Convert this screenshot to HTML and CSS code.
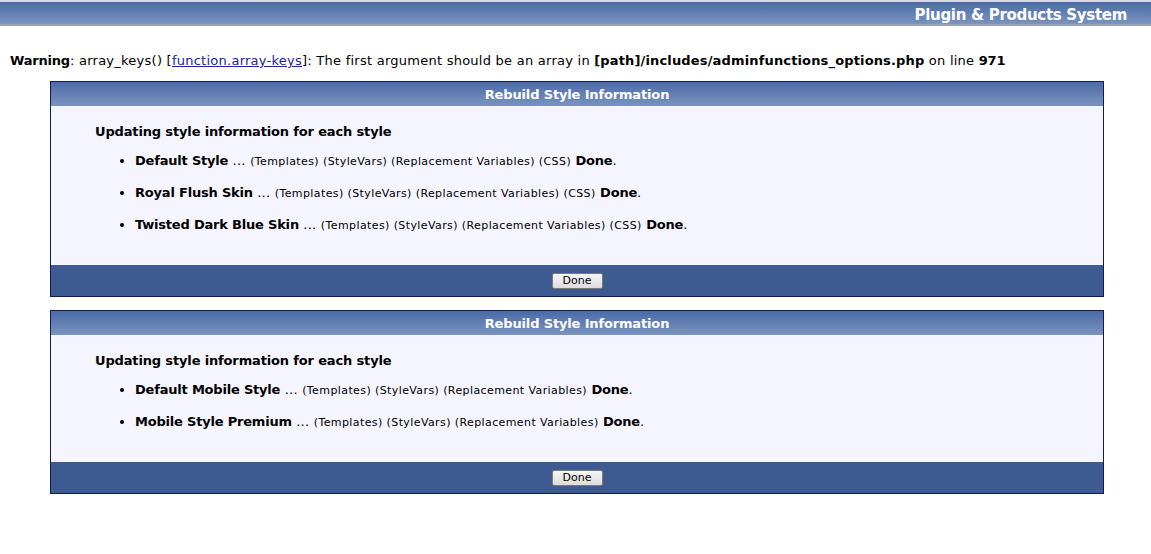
FILE: index.html
```html
<!DOCTYPE html>
<html>
<head>
<meta charset="utf-8">
<link rel="stylesheet" href="styles.css">
</head>
<body>
<div class="topbar"><span class="topbar-title">Plugin &amp; Products System</span></div>
<p class="warning"><b>Warning</b>: array_keys() [<a href="#">function.array-keys</a>]: The first argument should be an array in <b class="path">[path]/includes/adminfunctions_options.php</b> on line <b>971</b></p>

<div class="panel panel-1">
  <div class="panel-head">Rebuild Style Information</div>
  <div class="panel-body">
    <div class="panel-lead">Updating style information for each style</div>
    <ul class="style-list">
      <li><b>Default Style</b> ... <span class="sm">(Templates) (StyleVars) (Replacement Variables) (CSS)</span> <b>Done</b>.</li>
      <li><b>Royal Flush Skin</b> ... <span class="sm">(Templates) (StyleVars) (Replacement Variables) (CSS)</span> <b>Done</b>.</li>
      <li><b>Twisted Dark Blue Skin</b> ... <span class="sm">(Templates) (StyleVars) (Replacement Variables) (CSS)</span> <b>Done</b>.</li>
    </ul>
  </div>
  <div class="panel-foot"><button class="btn">Done</button></div>
</div>

<div class="panel panel-2">
  <div class="panel-head">Rebuild Style Information</div>
  <div class="panel-body">
    <div class="panel-lead">Updating style information for each style</div>
    <ul class="style-list">
      <li><b>Default Mobile Style</b> ... <span class="sm">(Templates) (StyleVars) (Replacement Variables)</span> <b>Done</b>.</li>
      <li><b>Mobile Style Premium</b> ... <span class="sm">(Templates) (StyleVars) (Replacement Variables)</span> <b>Done</b>.</li>
    </ul>
  </div>
  <div class="panel-foot"><button class="btn">Done</button></div>
</div>
</body>
</html>
```
FILE: styles.css
```css
html, body {
  margin: 0;
  padding: 0;
  background: #ffffff;
}
body {
  font-family: Verdana, "DejaVu Sans", sans-serif;
  font-size: 13px;
  letter-spacing: 0.25px;
  color: #000000;
}
b {
  letter-spacing: -0.2px;
}
.topbar {
  height: 19px;
  padding-top: 3px;
  border-top: 2px solid #d6d8de;
  border-bottom: 2px solid #9aa3b4;
  background: linear-gradient(to bottom, #4a6aa6, #7b94c0);
  display: flex;
  justify-content: flex-end;
  align-items: center;
  padding-right: 24px;
}
.topbar-title {
  color: #ffffff;
  font-weight: bold;
  font-size: 15px;
  letter-spacing: -0.3px;
}
.warning {
  margin: 27px 0 12px 10px;
  line-height: 16px;
}
.warning .path {
  letter-spacing: 0.15px;
}
.warning a {
  color: #22229c;
  text-decoration: underline;
}
.panel {
  margin: 0 47px 0 50px;
  border: 1px solid #0d1f4f;
}
.panel-2 {
  margin-top: 13px;
}
.panel-head {
  height: 24px;
  line-height: 26px;
  text-align: center;
  color: #ffffff;
  font-weight: bold;
  letter-spacing: -0.15px;
  background: linear-gradient(to bottom, #4b6ba7, #7b93bf);
}
.panel-body {
  background: #f5f5ff;
  padding: 18px 44px 32px 44px;
}
.panel-lead {
  font-weight: bold;
  line-height: 16px;
  letter-spacing: -0.15px;
}
.style-list {
  list-style: disc;
  margin: 13px 0 0 0;
  padding-left: 40px;
}
.style-list li {
  line-height: 16px;
  height: 16px;
  margin-bottom: 16px;
}
.style-list li:last-child {
  margin-bottom: 0;
}
.sm {
  font-size: 11px;
  letter-spacing: 0.4px;
  line-height: 1;
}
.panel-foot {
  background: #3e5b91;
  height: 31px;
  display: flex;
  justify-content: center;
  align-items: center;
}
.btn {
  font-family: Verdana, "DejaVu Sans", sans-serif;
  font-size: 11px;
  height: 16px;
  width: 51px;
  padding: 0;
  border: 1px solid #7a7a7a;
  border-radius: 2px;
  background: linear-gradient(to bottom, #f6f6f6, #dcdcdc);
  color: #000000;
}
```
